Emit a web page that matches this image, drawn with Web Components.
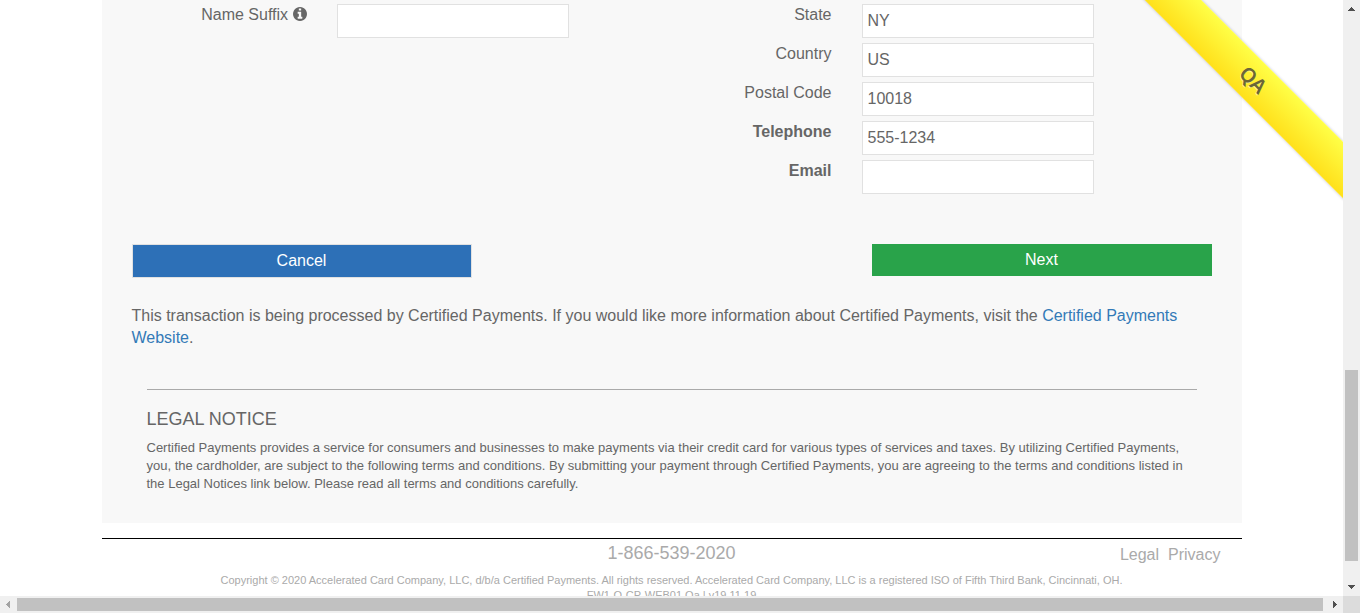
<!DOCTYPE html>
<html lang="en">
<head>
<meta charset="utf-8">
<title>Certified Payments</title>
<style>
body{margin:0;font:16px/22px "Liberation Sans",Arial,sans-serif;color:#666;background:#fff}
</style>
</head>
<body>
<app-window>
  <payment-page>
    <form-column slot="left">
      <form-field label="Name Suffix" info></form-field>
    </form-column>
    <form-column slot="right">
      <form-field label="State" value="NY"></form-field>
      <form-field label="Country" value="US"></form-field>
      <form-field label="Postal Code" value="10018"></form-field>
      <form-field label="Telephone" value="555-1234" required></form-field>
      <form-field label="Email" required></form-field>
    </form-column>
    <action-button slot="actions" kind="cancel">Cancel</action-button>
    <action-button slot="actions" kind="next">Next</action-button>
    <legal-notice></legal-notice>
    <page-footer slot="footer"></page-footer>
  </payment-page>
  <env-ribbon slot="ribbon">QA</env-ribbon>
</app-window>
<script>
const define = (name, render) => customElements.define(name, class extends HTMLElement {
  connectedCallback() {
    if (!this.shadowRoot) this.attachShadow({ mode: 'open' }).innerHTML = render(this);
  }
});

define('app-window', () => `
<style>
:host{display:grid;grid-template:minmax(0,1fr) 17px / minmax(0,1fr) 17px;height:100vh;overflow:hidden}
.view{position:relative;overflow:hidden}
.corner{background:#dcdcdc}
</style>
<div class="view"><slot></slot><slot name="ribbon"></slot></div>
<scroll-bar dir="vertical"></scroll-bar>
<scroll-bar dir="horizontal"></scroll-bar>
<div class="corner"></div>`);

define('scroll-bar', el => {
  const v = el.getAttribute('dir') === 'vertical';
  const arrow = (points, fill) => `<svg width="17" height="17" viewBox="0 0 17 17" shape-rendering="crispEdges"><path fill="${fill}" d="${points}"/></svg>`;
  return `
<style>
:host{display:flex;flex-direction:${v ? 'column' : 'row'};background:#f0f0f0;min-width:0;min-height:0}
svg{flex:none;display:block}
.track{flex:1;display:flex;flex-direction:${v ? 'column' : 'row'};min-width:0;min-height:0}
.before{flex:${v ? 353 : 0}}
.thumb{flex:${v ? 191 : 1306};background:#c1c1c1;margin:${v ? '0 2px' : '2px 0'}}
.after{flex:${v ? 18 : 3}}
</style>
${v ? arrow('M8 7h1v1h1v1h1v1h1v1H5v-1h1V9h1V8h1z', '#505050') : arrow('M10 5v7H9v-1H8v-1H7V9H6V8h1V7h1V6h1V5z', '#a3a3a3')}
<div class="track"><div class="before"></div><div class="thumb"></div><div class="after"></div></div>
${v ? arrow('M5 6h7v1h-1v1h-1v1H9v1H8V9H7V8H6V7H5z', '#505050') : arrow('M7 5h1v1h1v1h1v1h1v1h-1v1H9v1H8v1H7z', '#505050')}`;
});

define('payment-page', () => `
<style>
:host{display:block;max-width:1140px;margin:0 auto}
main{display:flow-root;background:#f8f8f8;padding:4px 30px 30px}
.columns{display:grid;grid-template-columns:1fr 1fr;margin-right:30px}
.actions{display:grid;grid-template-columns:repeat(3,1fr);gap:30px;align-items:start;margin-top:50px}
slot[name=actions]::slotted(:last-of-type){grid-column:3}
p{margin:27px 0 0}
a{color:#337ab7;text-decoration:none}
</style>
<main>
  <div class="columns"><slot name="left"></slot><slot name="right"></slot></div>
  <div class="actions"><slot name="actions"></slot></div>
  <p>This transaction is being processed by Certified Payments. If you would like more information about Certified Payments, visit the <a href="#">Certified Payments Website</a>.</p>
  <slot></slot>
</main>
<slot name="footer"></slot>`);

define('form-column', () => `
<style>:host{display:flex;flex-direction:column;gap:5px}</style><slot></slot>`);

define('form-field', el => `
<style>
:host{display:grid;grid-template-columns:175px 232px;column-gap:30px;align-items:start}
label{text-align:right;font-weight:${el.hasAttribute('required') ? 700 : 400}}
input{box-sizing:border-box;width:100%;height:34px;border:1px solid #e1e1e1;padding:0 5px;margin:0;background:#fff;color:inherit;font:inherit;border-radius:0}
svg{vertical-align:-1px}
</style>
<label for="f">${el.getAttribute('label')}${el.hasAttribute('info') ? ` <svg width="14" height="14" viewBox="0 0 1536 1536" aria-hidden="true"><path fill="#666" d="M1024 1248v-160q0-14-9-23t-23-9h-96V544q0-14-9-23t-23-9H544q-14 0-23 9t-9 23v160q0 14 9 23t23 9h96v320h-96q-14 0-23 9t-9 23v160q0 14 9 23t23 9h448q14 0 23-9t9-23zM896 352V192q0-14-9-23t-23-9H672q-14 0-23 9t-9 23v160q0 14 9 23t23 9h192q14 0 23-9t9-23zm640 416q0 209-103 385.500T1153.500 1433 768 1536t-385.500-103T103 1153.500 0 768t103-385.500T382.500 103 768 0t385.500 103T1433 382.500 1536 768z"/></svg>` : ''}</label>
<input id="f" type="text" value="${el.getAttribute('value') || ''}">`);

define('action-button', el => `
<style>
:host{display:block}
button{display:block;box-sizing:border-box;width:100%;margin:0;padding:0;border-radius:0;color:#fff;font:inherit;line-height:32px;cursor:pointer;
${el.getAttribute('kind') === 'cancel' ? 'background:#2d70b7;border:1px solid #e1e1e1' : 'background:#29a34a;border:0'}}
</style>
<button type="button"><slot></slot></button>`);

define('legal-notice', () => `
<style>
:host{display:block;margin:40px 15px 0;border-top:1px solid #aaa}
h2{margin:18px 0 9px;font-size:18px;line-height:22px;font-weight:400}
p{margin:0;font-size:13px;line-height:18px}
</style>
<h2>LEGAL NOTICE</h2>
<p>Certified Payments provides a service for consumers and businesses to make payments via their credit card for various types of services and taxes. By utilizing Certified Payments, you, the cardholder, are subject to the following terms and conditions. By submitting your payment through Certified Payments, you are agreeing to the terms and conditions listed in the Legal Notices link below. Please read all terms and conditions carefully.</p>`);

define('page-footer', () => `
<style>
:host{display:block;margin-top:15px;border-top:1px solid #000;color:#aaa}
.bar{display:grid;grid-template-columns:1fr auto 1fr;align-items:start;padding:4px 21px 0}
.phone{grid-column:2;font-size:18px;line-height:20px}
nav{display:flex;gap:9px;justify-content:flex-end;line-height:24px}
a{color:inherit;text-decoration:none}
small{display:block;font-size:11px;line-height:15px;text-align:center;margin-top:6px}
</style>
<footer>
<div class="bar"><span class="phone">1-866-539-2020</span><nav><a href="#">Legal</a><a href="#">Privacy</a></nav></div>
<small>Copyright © 2020 Accelerated Card Company, LLC, d/b/a Certified Payments. All rights reserved. Accelerated Card Company, LLC is a registered ISO of Fifth Third Bank, Cincinnati, OH.<br>FW1-Q-CP-WEB01.Qa | v19.11.19</small>
</footer>`);

define('env-ribbon', () => `
<style>
:host{position:absolute;top:60px;right:-60px;width:300px;height:40px;transform:rotate(45deg);
background:linear-gradient(#ffff47,#ffe01b);box-shadow:0 0 3px rgba(0,0,80,.25);
display:flex;align-items:center;justify-content:center;
font:600 20px/40px "Noto Sans",sans-serif;color:#6b6638;text-shadow:0 1px 0 rgba(255,255,255,.5)}
</style><slot></slot>`);
</script>
</body>
</html>
